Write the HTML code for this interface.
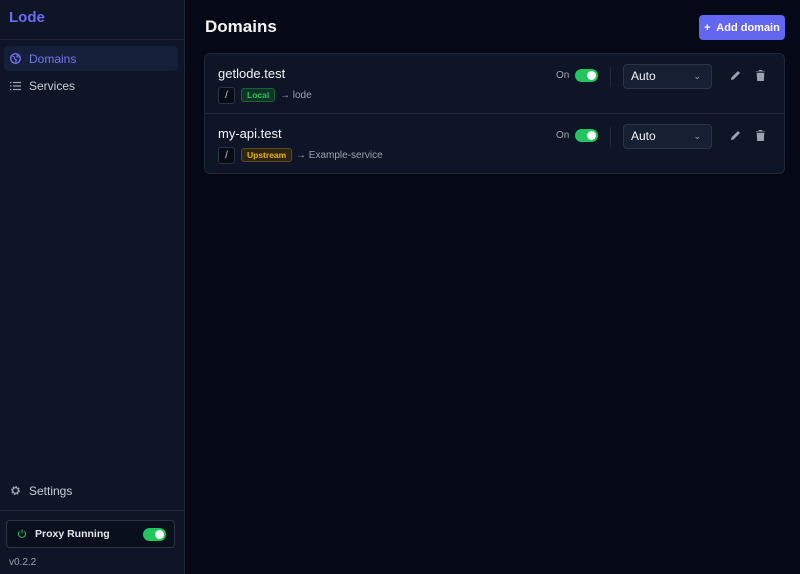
<!DOCTYPE html>
<html><head><style>
*{box-sizing:border-box;margin:0;padding:0}
body{width:800px;height:574px;background:#050816;font-family:"Liberation Sans",sans-serif;position:relative;overflow:hidden;color:#e5e7eb}
.side{position:absolute;left:0;top:0;width:185px;height:574px;background:#0e1527;border-right:1px solid #1f2937}
.logo{position:absolute;left:9px;top:9px;font-size:15px;font-weight:bold;color:#6b6cf0}
.hr{position:absolute;left:0;width:185px;height:1px;background:#1f2937}
.nav{position:absolute;left:4px;width:174px;height:25px;border-radius:5px;display:flex;align-items:center;padding-left:6px;font-size:12px;color:#c9ced6}
.nav svg{margin-right:8px}
.act{background:#161f3a;color:#7477f0}
.proxy{position:absolute;left:6px;top:520px;width:169px;height:28px;border:1px solid #2b3444;border-radius:4px;background:#0a0f1d;display:flex;align-items:center;padding-left:10px;font-size:10.5px;font-weight:bold;color:#e5e7eb}
.tog{width:23px;height:13px;border-radius:7px;background:#22c55e;position:absolute}
.tog::after{content:"";position:absolute;right:2px;top:2px;width:9px;height:9px;border-radius:50%;background:#fff}
h1{position:absolute;left:205px;top:17px;font-size:17px;font-weight:bold;color:#f3f4f6}
.btn{position:absolute;left:699px;top:15px;width:86px;height:25px;border-radius:4px;background:#6366f1;color:#fff;font-size:11px;font-weight:bold;display:flex;align-items:center;justify-content:center}
.card{position:absolute;left:204px;top:53px;width:581px;height:121px;border:1px solid #1f2937;border-radius:6px;background:#0e1527}
.row{position:absolute;left:0;width:579px;height:60px}
.name{position:absolute;left:13px;top:12px;font-size:13px;color:#f3f4f6}
.slash{position:absolute;left:13px;top:33px;width:17px;height:17px;border:1px solid #2b3444;border-radius:3px;background:#070b16;font-size:10px;color:#ccc;text-align:center;line-height:15px}
.badge{position:absolute;left:36px;top:34px;height:14px;padding:0 5px;border-radius:3px;font-size:8.5px;font-weight:bold;line-height:13px}
.tgt{position:absolute;top:36px;font-size:10px;color:#9ca3af}
.on{position:absolute;left:351px;top:16px;font-size:10px;color:#9ca3af}
.sep{position:absolute;left:405px;top:13px;width:1px;height:20px;background:#1f2937}
.sel{position:absolute;left:418px;top:10px;width:89px;height:25px;border:1px solid #2b3444;border-radius:4px;background:#172033;font-size:12px;color:#f3f4f6;padding-left:7px;line-height:23px}
.sel span{position:absolute;right:10px;top:0;font-size:9px;color:#9ca3af}
</style></head><body>
<div class="side">
<div class="logo">Lode</div>
<div class="hr" style="top:39px"></div>
<div class="nav act" style="top:46px"><svg width="11" height="11" viewBox="0 0 12 12"><circle cx="6" cy="6" r="5.2" fill="none" stroke="#7477f0" stroke-width="1.4"/><path d="M3 3.5l2 1 0 2 2 1-1 2.5M8 2l-.5 2 2 .5" fill="none" stroke="#7477f0" stroke-width="1.2"/></svg>Domains</div>
<div class="nav" style="top:73px"><svg width="11" height="10" viewBox="0 0 11 10"><path d="M0 1.5h1.5M3 1.5h8M0 5h1.5M3 5h8M0 8.5h1.5M3 8.5h8" stroke="#9ca3af" stroke-width="1.2"/></svg>Services</div>
<div class="nav" style="top:478px"><svg width="11" height="11" viewBox="0 0 12 12"><circle cx="6" cy="6" r="3.6" fill="none" stroke="#9ca3af" stroke-width="2.6" stroke-dasharray="1.6 1.2"/><circle cx="6" cy="6" r="3.2" fill="none" stroke="#9ca3af" stroke-width="1.3"/></svg>Settings</div>
<div class="hr" style="top:510px"></div>
<div class="proxy"><svg width="10" height="10" viewBox="0 0 10 10" style="margin-right:8px"><path d="M5 .5v4M2.5 2.2a3.6 3.6 0 1 0 5 0" fill="none" stroke="#22c55e" stroke-width="1"/></svg>Proxy Running<div class="tog" style="left:136px;top:7px"></div></div>
<div style="position:absolute;left:9px;top:557px;font-size:10px;color:#9ca3af">v0.2.2</div>
</div>
<h1>Domains</h1>
<div class="btn">+&nbsp; Add domain</div>
<div class="card">
<div class="row" style="top:0;border-bottom:1px solid #1f2937">
<div class="name">getlode.test</div><div class="slash">/</div>
<div class="badge" style="background:#0f3327;border:1px solid #166534;color:#22c55e">Local</div>
<div class="tgt" style="left:75px">→ lode</div>
<div class="on">On</div><div class="tog" style="left:370px;top:15px"></div><div class="sep"></div>
<div class="sel">Auto<span>⌄</span></div>
<svg style="position:absolute;left:525px;top:16px" width="11" height="11" viewBox="0 0 11 11"><path d="M1 10l.5-2.5L8 1l2 2-6.5 6.5z" fill="#9ca3af"/></svg>
<svg style="position:absolute;left:551px;top:16px" width="9" height="11" viewBox="0 0 9 11"><path d="M0 1.5h9M3 1V0h3v1M1 3h7l-.5 8h-6z" fill="#9ca3af" stroke="#9ca3af" stroke-width=".6"/></svg>
</div>
<div class="row" style="top:60px">
<div class="name">my-api.test</div><div class="slash">/</div>
<div class="badge" style="background:#2d2512;border:1px solid #5c4a1c;color:#eab308">Upstream</div>
<div class="tgt" style="left:91px">→ Example-service</div>
<div class="on">On</div><div class="tog" style="left:370px;top:15px"></div><div class="sep"></div>
<div class="sel">Auto<span>⌄</span></div>
<svg style="position:absolute;left:525px;top:16px" width="11" height="11" viewBox="0 0 11 11"><path d="M1 10l.5-2.5L8 1l2 2-6.5 6.5z" fill="#9ca3af"/></svg>
<svg style="position:absolute;left:551px;top:16px" width="9" height="11" viewBox="0 0 9 11"><path d="M0 1.5h9M3 1V0h3v1M1 3h7l-.5 8h-6z" fill="#9ca3af" stroke="#9ca3af" stroke-width=".6"/></svg>
</div>
</div>
</body></html>
